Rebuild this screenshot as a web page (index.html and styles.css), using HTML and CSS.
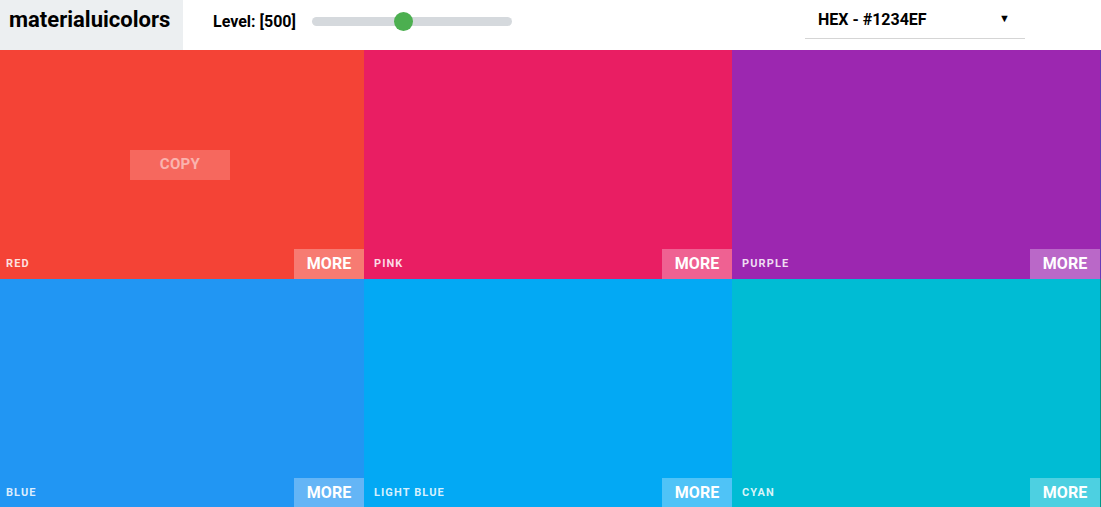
FILE: index.html
```html
<!doctype html>
<html>
	<head>
		<meta charset="utf-8" />
		<title>materialuicolors</title>
		<link rel="stylesheet" href="styles.css">
	</head>
	<body>
		<header class="top_bar">
			<div class="logo">materialuicolors</div>
			<div class="level">
				<span class="level_label">Level: [500]</span>
				<div class="slider">
					<div class="slider_knob"></div>
				</div>
			</div>
			<div class="format_select">
				<span>HEX - #1234EF</span>
				<span class="arrow">&#9660;</span>
			</div>
		</header>
		<main class="palette">
			<div class="tile red">
				<button class="copy">COPY</button>
				<div class="tile_foot">
					<span class="name">RED</span>
					<button class="more">MORE</button>
				</div>
			</div>
			<div class="tile pink">
				<div class="tile_foot">
					<span class="name">PINK</span>
					<button class="more">MORE</button>
				</div>
			</div>
			<div class="tile purple">
				<div class="tile_foot">
					<span class="name">PURPLE</span>
					<button class="more">MORE</button>
				</div>
			</div>
			<!-- next swatch in the row, only its first pixel is in view -->
			<div class="tile deep_purple"></div>
			<div class="tile blue">
				<div class="tile_foot">
					<span class="name">BLUE</span>
					<button class="more">MORE</button>
				</div>
			</div>
			<div class="tile light_blue">
				<div class="tile_foot">
					<span class="name">LIGHT BLUE</span>
					<button class="more">MORE</button>
				</div>
			</div>
			<div class="tile cyan">
				<div class="tile_foot">
					<span class="name">CYAN</span>
					<button class="more">MORE</button>
				</div>
			</div>
			<div class="tile teal"></div>
		</main>
	</body>
</html>
```

FILE: styles.css
```css
body {
	margin : 0;
	font-family : Roboto, "Liberation Sans", sans-serif;
	overflow : hidden;
}
.top_bar {
	display : flex;
	align-items : stretch;
	height : 50px;
	background-color : #ffffff;
}
.logo {
	width : 183px;
	background-color : #eceff1;
	font-size : 22px;
	font-weight : 700;
	line-height : 40px;
	padding-left : 9px;
	box-sizing : border-box;
	color : #000;
}
.level {
	display : flex;
	align-items : center;
	height : 42px;
	margin-left : 30px;
}
.level_label {
	font-size : 16px;
	font-weight : 700;
	color : #000;
}
.slider {
	position : relative;
	width : 200px;
	height : 9px;
	margin-left : 16px;
	margin-top : 1px;
	border-radius : 5px;
	background-color : #d5d9dd;
}
.slider_knob {
	position : absolute;
	left : 82px;
	top : -5px;
	width : 19px;
	height : 19px;
	border-radius : 50%;
	background-color : #4caf50;
}
.format_select {
	display : flex;
	justify-content : space-between;
	align-items : center;
	width : 220px;
	height : 39px;
	margin-left : 293px;
	padding : 0 15px 0 13px;
	box-sizing : border-box;
	border-bottom : 1px solid #d5d5d5;
	font-size : 16px;
	font-weight : 700;
	color : #000;
}
.format_select .arrow {
	font-size : 11px;
	padding-bottom : 1px;
}
.palette {
	display : grid;
	grid-template-columns : 368px 368px 368px 1px;
	grid-auto-rows : 229px;
	margin-left : -4px;
}
.tile {
	position : relative;
	display : flex;
	flex-direction : column;
	justify-content : flex-end;
}
.tile_foot {
	display : flex;
	justify-content : space-between;
	align-items : center;
	height : 30px;
}
.name {
	padding-left : 10px;
	padding-bottom : 2px;
	font-size : 11px;
	font-weight : 700;
	letter-spacing : 1.1px;
	color : rgba(255, 255, 255, 0.85);
}
button {
	font-family : Roboto, "Liberation Sans", sans-serif;
	border : none;
	cursor : pointer;
}
.more {
	width : 70px;
	height : 30px;
	padding : 0 0 2px 0;
	background-color : rgba(255, 255, 255, 0.3);
	color : #ffffff;
	font-size : 16px;
	font-weight : 700;
}
.copy {
	position : absolute;
	left : 134px;
	top : 100px;
	width : 100px;
	height : 30px;
	padding : 0 0 2px 0;
	background-color : rgba(255, 255, 255, 0.2);
	color : rgba(255, 255, 255, 0.5);
	font-size : 15px;
	font-weight : 700;
	letter-spacing : 0.3px;
}
.red { background-color : #f44336; }
.pink { background-color : #e91e63; }
.purple { background-color : #9c27b0; }
.deep_purple { background-color : #673ab7; }
.blue { background-color : #2196f3; }
.light_blue { background-color : #03a9f4; }
.cyan { background-color : #00bcd4; }
.teal { background-color : #009688; }
```
